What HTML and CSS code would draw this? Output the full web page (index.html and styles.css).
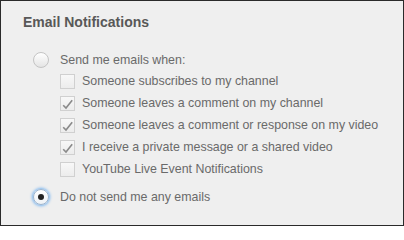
FILE: index.html
```html
<!DOCTYPE html>
<html>
<head>
<meta charset="utf-8">
<link rel="stylesheet" href="styles.css">
</head>
<body>
<div class="frame">
  <h2 class="title">Email Notifications</h2>
  <div class="radio-row first">
    <span class="radio"></span>
    <span class="label">Send me emails when:</span>
  </div>
  <div class="checks">
    <div class="check-row"><span class="box"></span><span class="label">Someone subscribes to my channel</span></div>
    <div class="check-row"><span class="box"><svg class="tick" viewBox="0 0 15 15" width="15" height="15"><path d="M3.2 9.2 L6 12 L12.2 4.2" fill="none" stroke="#8a8a8a" stroke-width="1.6"/></svg></span><span class="label">Someone leaves a comment on my channel</span></div>
    <div class="check-row"><span class="box"><svg class="tick" viewBox="0 0 15 15" width="15" height="15"><path d="M3.2 9.2 L6 12 L12.2 4.2" fill="none" stroke="#8a8a8a" stroke-width="1.6"/></svg></span><span class="label">Someone leaves a comment or response on my video</span></div>
    <div class="check-row"><span class="box"><svg class="tick" viewBox="0 0 15 15" width="15" height="15"><path d="M3.2 9.2 L6 12 L12.2 4.2" fill="none" stroke="#8a8a8a" stroke-width="1.6"/></svg></span><span class="label">I receive a private message or a shared video</span></div>
    <div class="check-row"><span class="box"></span><span class="label">YouTube Live Event Notifications</span></div>
  </div>
  <div class="radio-row second">
    <span class="radio selected"><span class="dot"></span></span>
    <span class="label">Do not send me any emails</span>
  </div>
</div>
</body>
</html>
```
FILE: styles.css
```css
html, body {
  margin: 0;
  padding: 0;
}
body {
  font-family: "Liberation Sans", Arial, sans-serif;
}
.frame {
  box-sizing: border-box;
  width: 404px;
  height: 226px;
  border: 1px solid #2a2a2a;
  background: #efefef;
  padding: 13px 0 0 22px;
  display: flex;
  flex-direction: column;
}
.title {
  margin: 0;
  font-size: 14px;
  line-height: 17px;
  font-weight: bold;
  color: #585858;
}
.label {
  font-size: 12.4px;
  color: #6a6a6a;
  white-space: nowrap;
}
.radio-row {
  display: flex;
  align-items: center;
  padding-left: 10px;
  gap: 11px;
}
.radio-row.first {
  margin-top: 18px;
  height: 21px;
}
.radio-row.second {
  margin-top: 6px;
  height: 22px;
}
.radio {
  box-sizing: border-box;
  width: 16px;
  height: 16px;
  border-radius: 50%;
  border: 1px solid #c4c4c4;
  background: linear-gradient(#ffffff, #e4e4e4);
  display: flex;
  align-items: center;
  justify-content: center;
  flex: none;
}
.radio.selected {
  border-color: #9bb4cf;
  background: linear-gradient(#ffffff, #eef2f6);
  box-shadow: 0 0 3px 1px #6fb0f0;
}
.dot {
  width: 6px;
  height: 6px;
  border-radius: 50%;
  background: #222;
}
.checks {
  display: flex;
  flex-direction: column;
  padding-left: 37px;
}
.check-row {
  display: flex;
  align-items: center;
  height: 22px;
  gap: 7px;
}
.box {
  box-sizing: border-box;
  width: 15px;
  height: 15px;
  border: 1px solid #d0d0d0;
  background: linear-gradient(#f8f8f8, #ececec);
  flex: none;
  position: relative;
}
.tick {
  position: absolute;
  left: -1px;
  top: -1px;
}
```
